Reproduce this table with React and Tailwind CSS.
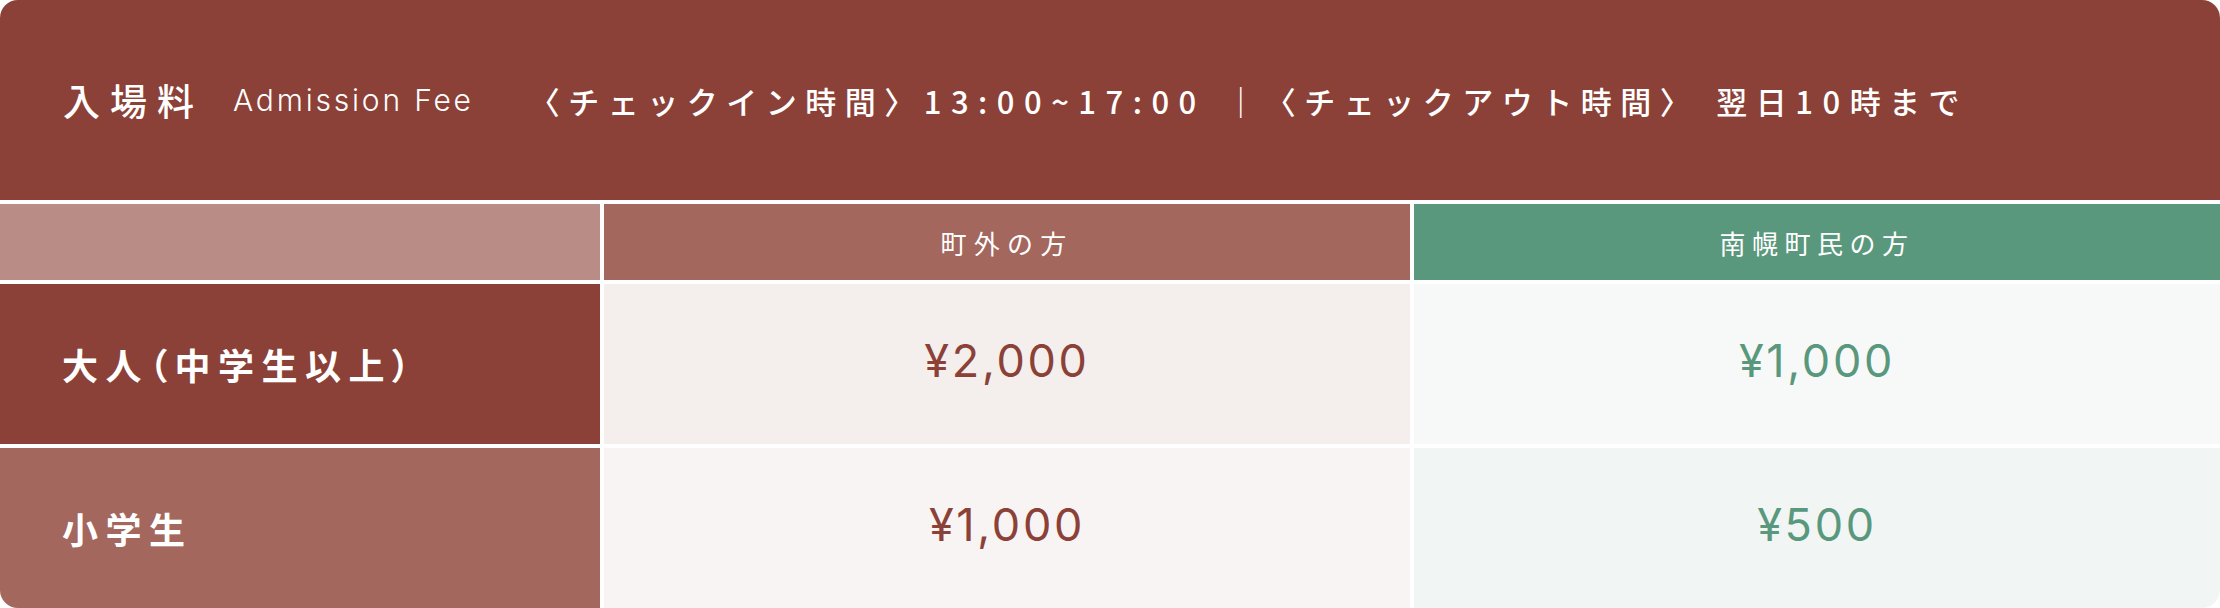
const jp = "font-['Noto_Sans_CJK_JP','Noto_Sans',sans-serif]";
const latin = "font-['Inter','Noto_Sans_CJK_JP',sans-serif]";

const rows = [
  { label: '大人（中学生以上）', labelBg: 'bg-[#8b4137]', out: '¥2,000', outBg: 'bg-[#f4efec]', local: '¥1,000', localBg: 'bg-[#f7f9f8]' },
  { label: '小学生', labelBg: 'bg-[#a4675e]', out: '¥1,000', outBg: 'bg-[#f8f4f3]', local: '¥500', localBg: 'bg-[#f1f5f4]' },
];

export default function App() {
  return (
    <div className="w-[2220px] h-[608px] bg-white">
      <div className="flex flex-col gap-[4px] rounded-[18px] overflow-hidden bg-white">
        <div className="h-[200px] bg-[#8b4137] flex items-center pl-[63px] text-white">
          <h2 className={`${jp} text-[37px] font-medium tracking-[10px] leading-none`}>入場料</h2>
          <span className={`${latin} ml-[29px] text-[30px] font-light tracking-[2.8px] leading-none`}>Admission Fee</span>
          <p className={`${jp} ml-[55px] text-[31px] font-medium tracking-[8.5px] leading-none whitespace-nowrap`}>
            〈チェックイン時間〉<span className="tracking-[9.5px]">13:00~17:00</span>
            <span className="ml-[4px]"> ｜</span>〈チェックアウト時間〉<span className="ml-[17px]">翌日</span>
            <span className="tracking-[9.5px]">10</span>時まで
          </p>
        </div>

        <div className="grid grid-cols-[600px_1fr_1fr] grid-rows-[76px_160px_160px] gap-[4px]">
          <div className="bg-[#b98c86]" />
          <div className={`${jp} bg-[#a4675e] flex items-center justify-center text-white text-[26px] tracking-[0.28em]`}>
            町外の方
          </div>
          <div className={`${jp} bg-[#5a987d] flex items-center justify-center text-white text-[26px] tracking-[0.25em]`}>
            南幌町民の方
          </div>

          {rows.map((r) => (
            <div key={r.label} className="contents">
              <div className={`${jp} ${r.labelBg} flex items-center pl-[62px] text-white text-[36px] font-bold tracking-[7.5px] [font-feature-settings:'palt']`}>
                {r.label}
              </div>
              <div className={`${latin} ${r.outBg} flex items-center justify-center pb-[6px] text-[#8b4137] text-[45px] tracking-[0.06em]`}>
                {r.out}
              </div>
              <div className={`${latin} ${r.localBg} flex items-center justify-center pb-[6px] text-[#5a987d] text-[45px] tracking-[0.06em]`}>
                {r.local}
              </div>
            </div>
          ))}
        </div>
      </div>
    </div>
  );
}
